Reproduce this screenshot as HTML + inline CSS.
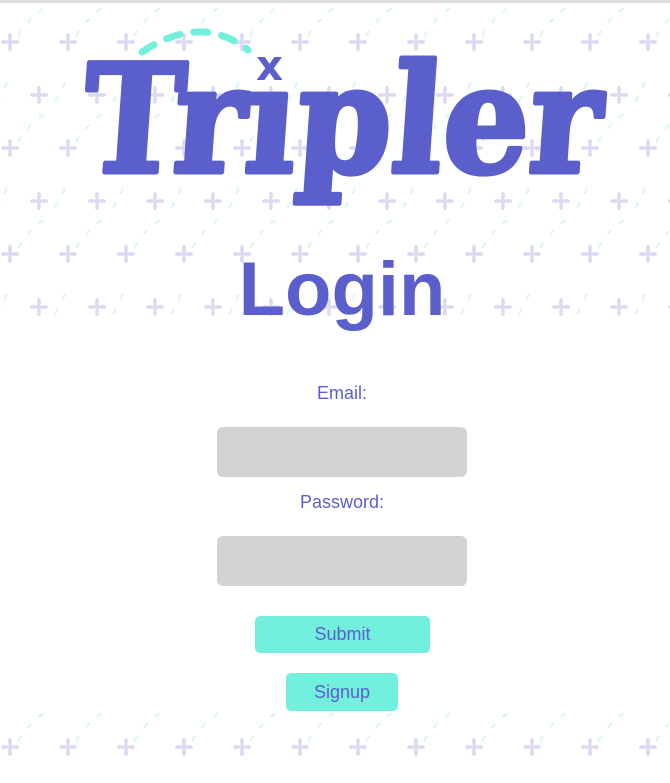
<!DOCTYPE html>
<html><head><meta charset="utf-8"><style>
html,body{margin:0;padding:0}
body{width:670px;height:783px;position:relative;overflow:hidden;background:#fff;font-family:"Liberation Sans",sans-serif}
.bg{position:absolute;left:0;width:670px}
.topline{position:absolute;left:0;top:0;width:670px;height:3px;background:#dcdcdc}
.logo{position:absolute;left:0;top:0;width:670px;height:240px}
h1{position:absolute;left:0;width:684px;top:246px;margin:0;text-align:center;font-size:76px;font-weight:bold;color:#5b5fcb}
.lbl{position:absolute;left:0;width:684px;text-align:center;font-size:18px;color:#5b5fcb}
.inp{position:absolute;left:217px;width:250px;height:50px;background:#d3d3d3;border-radius:6px}
.btn{position:absolute;background:#72efdd;border-radius:5px;color:#5b5fcb;font-size:18px;text-align:center}
</style></head><body>
<svg class="bg" style="top:0" width="670" height="783" viewBox="0 0 670 783">
<defs>
<g id="c"><path d="M0,-9 C-3,-9 -1.5,-3 -1.5,-1.5 C-3,-1.5 -9,-3 -9,0 C-9,3 -3,1.5 -1.5,1.5 C-1.5,3 -3,9 0,9 C3,9 1.5,3 1.5,1.5 C3,1.5 9,3 9,0 C9,-3 3,-1.5 1.5,-1.5 C1.5,-3 3,-9 0,-9Z" fill="#dcd9f3"/></g>
<pattern id="p2" width="58" height="106" patternUnits="userSpaceOnUse" x="-48" y="-64">
<path d="M8,100 q12,-20 32,-32 M45,60 q8,-14 12,-25" stroke="#d8f7f2" stroke-width="2" stroke-dasharray="6 10" fill="none"/>
<use href="#c" x="29" y="53"/><use href="#c" x="0" y="0"/><use href="#c" x="58" y="0"/><use href="#c" x="0" y="106"/><use href="#c" x="58" y="106"/>
</pattern>
</defs>
<rect x="0" y="0" width="670" height="322" fill="url(#p2)"/>
<g transform="translate(0,705)"><rect x="0" y="0" width="670" height="78" fill="url(#p2)"/></g>
</svg>
<div class="topline"></div>
<svg class="logo" width="670" height="240" viewBox="0 0 670 240">
<path d="M142,52 Q175,30 205,32 Q230,35 248,50" stroke="#72efdd" stroke-width="7" stroke-linecap="round" stroke-dasharray="14 14" fill="none"/>
<text x="256" y="80" font-family="DejaVu Sans,sans-serif" font-weight="bold" font-size="42" fill="#5b5fcb">x</text>
<g transform="skewX(-4)">
<text x="92" y="172" font-family="DejaVu Serif,serif" font-weight="bold" font-size="150" fill="#5b5fcb" stroke="#5b5fcb" stroke-width="5" stroke-linejoin="round" textLength="518" lengthAdjust="spacingAndGlyphs">Trıpler</text>
</g>
</svg>
<h1>Login</h1>
<div class="lbl" style="top:383px">Email:</div>
<div class="inp" style="top:427px"></div>
<div class="lbl" style="top:492px">Password:</div>
<div class="inp" style="top:536px"></div>
<div class="btn" style="left:255px;top:616px;width:175px;height:37px;line-height:37px">Submit</div>
<div class="btn" style="left:286px;top:673px;width:112px;height:38px;line-height:38px">Signup</div>
</body></html>
